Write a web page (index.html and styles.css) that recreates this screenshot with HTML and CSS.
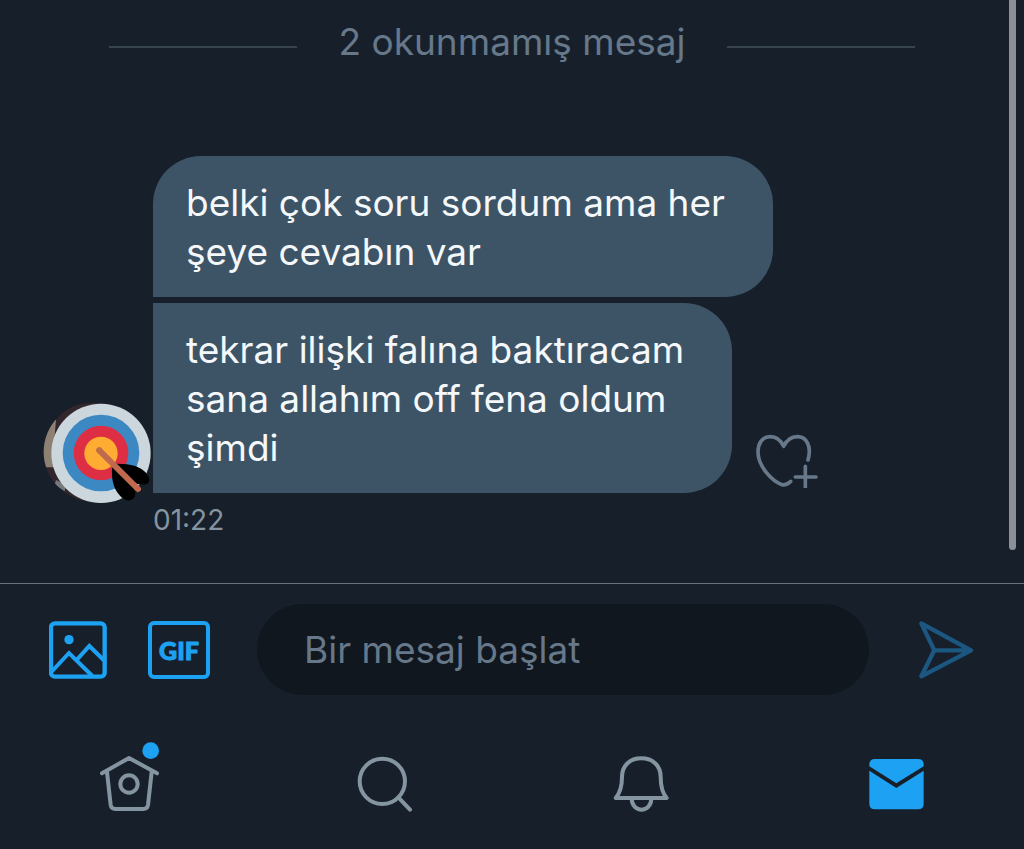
FILE: index.html
```html
<!DOCTYPE html>
<html lang="tr">
<head>
<meta charset="utf-8">
<meta name="viewport" content="width=device-width, initial-scale=1">
<title>Mesajlar</title>
<link rel="stylesheet" href="styles.css">
</head>
<body>
<div class="app">
  <main class="thread">
    <div class="unread"><span>2 okunmamış mesaj</span></div>
    <div class="group">
      <svg class="avatar" viewBox="39 39 324 303" role="img" aria-label="Profil fotoğrafı">
        <defs><clipPath id="photo"><circle cx="190" cy="186" r="149"/></clipPath></defs>
        <g clip-path="url(#photo)">
          <rect x="39" y="30" width="300" height="310" fill="#30262b"/>
          <path d="M39 90H78L72 160V232H39z" fill="#8d8173"/>
          <path d="M78 270l30 14-4 20-30-20z" fill="#77797d"/>
        </g>
        <circle cx="213" cy="190" r="149" fill="#ccd6dd"/>
        <circle cx="213" cy="189" r="115" fill="#3b88c3"/>
        <circle cx="213" cy="189" r="82" fill="#dd2e44"/>
        <circle cx="213" cy="190" r="50" fill="#ffac33"/>
        <path d="M247 222C295 219 328 229 343 244C361 261 362 276 350 282C337 287 319 280 306 278C314 296 321 311 311 325C302 336 283 333 268 315C248 292 243 262 247 222z"/>
        <path d="M208 181L324 297" stroke="#c1694f" stroke-width="18" stroke-linecap="round"/>
        <circle cx="208" cy="181" r="9" fill="#be6e45"/>
      </svg>
      <div class="messages">
        <p class="bubble bubble-first">belki çok soru sordum ama her<br>şeye cevabın var</p>
        <div class="line">
          <p class="bubble">tekrar ilişki falına baktıracam<br>sana allahım off fena oldum<br>şimdi</p>
          <button class="icon-button react" type="button" aria-label="Tepki ekle">
            <svg width="62" height="54" viewBox="48 42 186 162" fill="none" stroke="#66788a" stroke-width="11" stroke-linecap="round" stroke-linejoin="round">
              <path d="M204 120C216 78 199 50 172 50C153 50 139 62 131 79C123 62 109 50 91 50C65 50 54 72 54 96C54 139 96 183 126 194C134 196 145 191 152 184M196 139V201M166 171H228"/>
            </svg>
          </button>
        </div>
      </div>
      <time class="time">01:22</time>
    </div>
    <div class="scroll-thumb"></div>
  </main>
  <form class="composer">
    <button class="icon-button" type="button" aria-label="Fotoğraf ekle">
      <svg width="58" height="58" viewBox="57 62 174 174" fill="none" stroke="#1da1f2" stroke-width="13">
        <rect x="63" y="69" width="161" height="160" rx="12"/>
        <path d="M64 215L117 158L187 227M139 180L178 137L224 182" stroke-width="12"/>
        <circle cx="117" cy="118" r="14" fill="#1da1f2" stroke="none"/>
      </svg>
    </button>
    <button class="icon-button gif" type="button" aria-label="GIF ekle">
      <span class="gif-frame">GIF</span>
    </button>
    <input class="field" type="text" placeholder="Bir mesaj başlat" aria-label="Bir mesaj başlat">
    <button class="icon-button" type="submit" aria-label="Gönder">
      <svg width="55" height="58" viewBox="296 92 165 174" fill="none" stroke="#1b5780" stroke-width="13" stroke-linecap="round" stroke-linejoin="round">
        <path d="M303 99L452 180L303 258L342 180zM342 180H446"/>
      </svg>
    </button>
  </form>
  <nav class="tabs">
    <a class="tab" href="#home" aria-label="Ana sayfa">
      <svg width="60" height="70" viewBox="58 36 180 210" fill="none" stroke="#8494a1" stroke-width="12" stroke-linecap="round" stroke-linejoin="round">
        <path d="M64 130L145 84L229 130M79 126L90 225Q92 237 104 237H188Q200 237 202 225L213 126"/>
        <circle cx="145" cy="162" r="26"/>
        <circle cx="210" cy="62" r="25" fill="#1da1f2" stroke="none"/>
      </svg>
    </a>
    <a class="tab" href="#search" aria-label="Ara">
      <svg width="56" height="56" viewBox="51 45 168 168" fill="none" stroke="#8494a1" stroke-width="12" stroke-linecap="round">
        <circle cx="127" cy="121" r="68"/><path d="M175 169L210 206"/>
      </svg>
    </a>
    <a class="tab" href="#notifications" aria-label="Bildirimler">
      <svg width="56" height="56" viewBox="41 46 168 168" fill="none" stroke="#8494a1" stroke-width="12" stroke-linejoin="round">
        <path d="M49 172C62 157 68 137 68 109C68 73 93 53 126 53C159 53 184 73 184 109C184 137 189 157 202 172zM97 174C98 218 155 218 156 174"/>
      </svg>
    </a>
    <a class="tab" href="#messages" aria-label="Mesajlar" aria-current="page">
      <svg width="56" height="56" viewBox="56 49 168 168" fill="#1da1f2">
        <path d="M60 80V75Q60 58 77 58H206Q223 58 223 75V80L141 131z"/>
        <path d="M60 93L141 145L223 93V192Q223 209 206 209H77Q60 209 60 192z"/>
      </svg>
    </a>
  </nav>
</div>
</body>
</html>
```
FILE: styles.css
```css
* {
  box-sizing: border-box;
}

body {
  margin: 0;
  background: #17202a;
  color: #f5f8fa;
  font-family: Inter, "Liberation Sans", sans-serif;
}

.app {
  display: flex;
  flex-direction: column;
  min-height: 100vh;
}

.thread {
  position: relative;
  flex: 1;
  padding-top: 18px;
}

.unread {
  display: flex;
  align-items: center;
  gap: 42px;
  margin: 0 109px 90px;
  color: #66788a;
  font-size: 37px;
  line-height: 48px;
}

.unread::before,
.unread::after {
  content: "";
  flex: 1;
  height: 2px;
  margin-top: 10px;
  background: #38444d;
}

.group {
  display: grid;
  grid-template-columns: 108px 1fr;
  column-gap: 2px;
  padding-left: 43px;
}

.avatar {
  width: 108px;
  height: 101px;
  align-self: end;
  margin-bottom: -11px;
}

.messages {
  display: flex;
  flex-direction: column;
  align-items: flex-start;
  gap: 6px;
}

.line {
  display: flex;
  align-items: flex-end;
  gap: 24px;
}

.bubble {
  margin: 0;
  padding: 22px 48px 21px 33px;
  border-radius: 0 48px 48px 0;
  background: #3d5466;
  font-size: 37px;
  line-height: 49px;
}

.bubble-first {
  border-top-left-radius: 48px;
}

.react {
  margin-bottom: 5px;
}

.time {
  grid-column: 2;
  margin-top: 10px;
  color: #8494a1;
  font-size: 28px;
  line-height: 34px;
}

.scroll-thumb {
  position: absolute;
  top: 0;
  right: 8px;
  bottom: 33px;
  width: 7px;
  border-radius: 0 0 4px 4px;
  background: #8b8f97;
}

.icon-button {
  display: flex;
  padding: 0;
  border: 0;
  background: none;
  font: inherit;
  cursor: pointer;
}

.composer {
  display: flex;
  align-items: center;
  padding: 20px 50px 0 49px;
  border-top: 1px solid #66737d;
}

.gif {
  margin: 0 47px 0 41px;
}

.gif-frame {
  display: flex;
  align-items: center;
  justify-content: center;
  width: 62px;
  height: 58px;
  border: 4px solid #1da1f2;
  border-radius: 6px;
  color: #1da1f2;
  font-family: Lato, Inter, sans-serif;
  font-size: 25px;
  font-weight: 900;
  -webkit-text-stroke: 1px #1da1f2;
}

.field {
  flex: 1;
  min-width: 0;
  height: 91px;
  margin-right: 50px;
  padding: 0 47px;
  border: 0;
  border-radius: 46px;
  outline: 0;
  background: #10171e;
  color: #f5f8fa;
  font: inherit;
  font-size: 37px;
}

.field::placeholder {
  color: #66788a;
  opacity: 1;
}

.tabs {
  display: grid;
  grid-template-columns: repeat(4, 1fr);
  align-items: end;
  padding: 47px 0 37px 2px;
}

.tab {
  display: flex;
  justify-content: center;
}
```
